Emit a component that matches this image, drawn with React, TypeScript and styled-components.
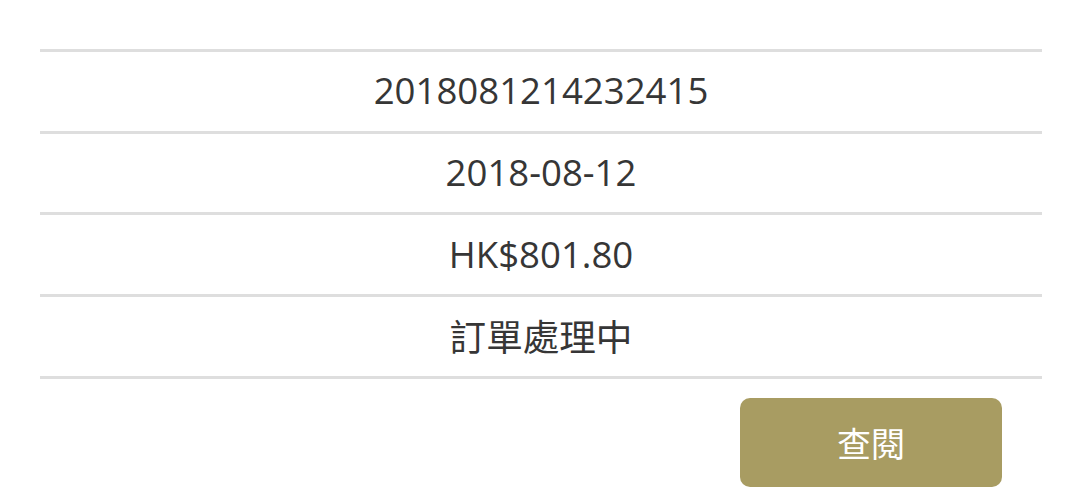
import styled, { createGlobalStyle } from "styled-components"

const GlobalStyle = createGlobalStyle`
  html, body {
    margin: 0;
    padding: 0;
    background: #ffffff;
  }
  body {
    font-family: "Open Sans", "Noto Sans CJK TC", sans-serif;
    color: #333333;
  }
`

const rows = ["2018081214232415", "2018-08-12", "HK$801.80", "訂單處理中"]

export default function App() {
  return (
    <>
      <GlobalStyle />
      <StyledOrder>
        <StyledList>
          {rows.map((text) => (
            <StyledRow key={text}>{text}</StyledRow>
          ))}
        </StyledList>
        <StyledActions>
          <StyledButton type="button">查閱</StyledButton>
        </StyledActions>
      </StyledOrder>
    </>
  )
}

const StyledOrder = styled.section`
  padding: 49px 38px 0 40px;
  display: flex;
  flex-direction: column;
`

const StyledList = styled.div`
  display: flex;
  flex-direction: column;
  border-bottom: 3px solid #dedede;
`

const StyledRow = styled.div`
  box-sizing: content-box;
  height: 76.7px;
  padding-bottom: 2px;
  border-top: 3px solid #dedede;
  display: flex;
  align-items: center;
  justify-content: center;
  font-size: 36.6px;
  color: #363636;
`

const StyledActions = styled.div`
  display: flex;
  justify-content: flex-end;
  padding: 19px 40px 0 0;
`

const StyledButton = styled.button`
  width: 262px;
  height: 89px;
  border: none;
  border-radius: 10px;
  background: #a89c62;
  color: #ffffff;
  font-family: "Noto Sans CJK TC", sans-serif;
  font-size: 34px;
  display: flex;
  align-items: center;
  justify-content: center;
  padding: 0;
`
